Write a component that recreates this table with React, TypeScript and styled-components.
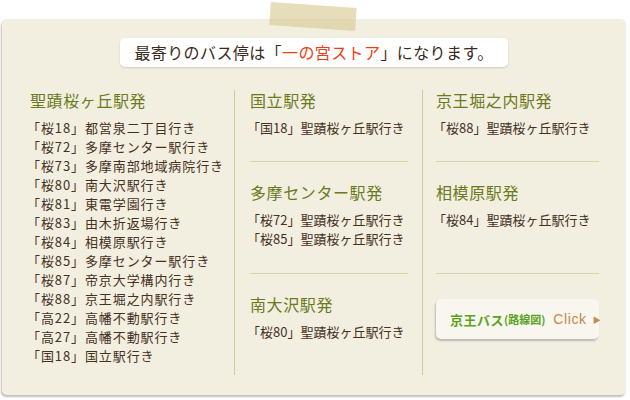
import React from 'react';
import styled, { createGlobalStyle } from 'styled-components';

const Global = createGlobalStyle`
  html, body { margin: 0; padding: 0; background: #ffffff; }
  body { font-family: "Noto Sans CJK JP", "Noto Sans", sans-serif; }
`;

const Page = styled.div`
  position: relative;
  width: 630px;
  height: 400px;
  padding: 19px 4px 0 2px;
  box-sizing: border-box;
`;

const Tape = styled.div`
  position: absolute;
  left: 270px;
  top: 5px;
  width: 86px;
  height: 23px;
  background: rgba(214, 200, 146, 0.62);
  transform: rotate(4deg);
  z-index: 2;
`;

const Panel = styled.div`
  height: 376px;
  background: #f2efe1;
  border-radius: 5px;
  box-shadow: -1px 2px 2px rgba(0, 0, 0, 0.25);
  padding-top: 19px;
  box-sizing: border-box;
  display: flex;
  flex-direction: column;
  align-items: center;
`;

const Banner = styled.div`
  width: 388px;
  height: 29px;
  background: #ffffff;
  border-radius: 5px;
  box-shadow: 0 1px 2px rgba(0, 0, 0, 0.15);
  font-size: 16px;
  line-height: 29px;
  letter-spacing: 0.4px;
  color: #3a2a1c;
  text-align: center;
`;

const Red = styled.span`
  color: #ee3d16;
`;

const Columns = styled.div`
  margin-top: 23px;
  width: 100%;
  display: grid;
  grid-template-columns: 232px 188px 1fr;
  min-height: 285px;
`;

const Column = styled.div<{ $divided?: boolean; $pl: number; $pr: number }>`
  padding-left: ${p => p.$pl}px;
  padding-right: ${p => p.$pr}px;
  border-left: ${p => (p.$divided ? '1px solid #cdcd98' : 'none')};
  display: flex;
  flex-direction: column;
`;

const SectionWrap = styled.div<{ $minH?: number }>`
  min-height: ${p => p.$minH ?? 0}px;
`;

const Heading = styled.h3`
  margin: 0 0 8px;
  font-size: 16px;
  line-height: 20px;
  font-weight: normal;
  letter-spacing: 0.6px;
  color: #6b7a20;
`;

const List = styled.ul<{ $spacing?: number }>`
  margin: 0 0 0 -3px;
  padding: 0;
  list-style: none;
  letter-spacing: ${p => p.$spacing ?? 0}px;
`;

const Item = styled.li`
  font-size: 13px;
  line-height: 19px;
  color: #47311d;
  white-space: nowrap;
`;

const Rule = styled.hr`
  margin: 24px 0 20px;
  border: none;
  border-top: 1px solid #d6d2ad;
  height: 0;
`;

const Button = styled.a`
  margin-top: 5px;
  width: 163px;
  height: 40px;
  flex: none;
  box-sizing: border-box;
  padding-left: 14px;
  background: #f8f6ee;
  border-radius: 5px;
  box-shadow: -1px 2px 2px rgba(0, 0, 0, 0.22);
  display: flex;
  align-items: center;
  text-decoration: none;
  white-space: nowrap;
`;

const BtnName = styled.span`
  font-size: 13px;
  font-weight: bold;
  color: #5aa31d;
  letter-spacing: 0.5px;
`;

const BtnSub = styled.span`
  font-size: 11px;
  font-weight: bold;
  color: #5aa31d;
  margin-right: 8px;
`;

const Click = styled.span`
  font-family: "Liberation Sans", Arial, sans-serif;
  font-size: 14px;
  color: #c6894a;
  letter-spacing: 0.6px;
`;

const Arrow = styled.span`
  font-size: 8px;
  color: #c6894a;
  margin-left: 6px;
`;

type Section = { title: string; items: string[] };

const col1: Section = {
  title: '聖蹟桜ヶ丘駅発',
  items: [
    '「桜18」都営泉二丁目行き',
    '「桜72」多摩センター駅行き',
    '「桜73」多摩南部地域病院行き',
    '「桜80」南大沢駅行き',
    '「桜81」東電学園行き',
    '「桜83」由木折返場行き',
    '「桜84」相模原駅行き',
    '「桜85」多摩センター駅行き',
    '「桜87」帝京大学構内行き',
    '「桜88」京王堀之内駅行き',
    '「高22」高幡不動駅行き',
    '「高27」高幡不動駅行き',
    '「国18」国立駅行き',
  ],
};

const col2: Section[] = [
  { title: '国立駅発', items: ['「国18」聖蹟桜ヶ丘駅行き'] },
  { title: '多摩センター駅発', items: ['「桜72」聖蹟桜ヶ丘駅行き', '「桜85」聖蹟桜ヶ丘駅行き'] },
  { title: '南大沢駅発', items: ['「桜80」聖蹟桜ヶ丘駅行き'] },
];

const col3: Section[] = [
  { title: '京王堀之内駅発', items: ['「桜88」聖蹟桜ヶ丘駅行き'] },
  { title: '相模原駅発', items: ['「桜84」聖蹟桜ヶ丘駅行き'] },
];

// row heights shared by the stacked sections of the two right columns
const rowHeights = [47, 67, 47];

const SectionBlock = ({ s, minH, spacing }: { s: Section; minH?: number; spacing?: number }) => (
  <SectionWrap $minH={minH}>
    <Heading>{s.title}</Heading>
    <List $spacing={spacing}>
      {s.items.map(i => (
        <Item key={i}>{i}</Item>
      ))}
    </List>
  </SectionWrap>
);

export default function App() {
  return (
    <Page>
      <Global />
      <Tape />
      <Panel>
        <Banner>
          最寄りのバス停は「<Red>一の宮ストア</Red>」になります。
        </Banner>
        <Columns>
          <Column $pl={28} $pr={0}>
            <SectionBlock s={col1} spacing={0.9} />
          </Column>
          <Column $divided $pl={15} $pr={14}>
            {col2.map((s, idx) => (
              <React.Fragment key={s.title}>
                {idx > 0 && <Rule />}
                <SectionBlock s={s} minH={rowHeights[idx]} />
              </React.Fragment>
            ))}
          </Column>
          <Column $divided $pl={13} $pr={30}>
            {col3.map((s, idx) => (
              <React.Fragment key={s.title}>
                {idx > 0 && <Rule />}
                <SectionBlock s={s} minH={rowHeights[idx]} />
              </React.Fragment>
            ))}
            <Rule />
            <Button href="#">
              <BtnName>京王バス</BtnName>
              <BtnSub>(路線図)</BtnSub>
              <Click>Click</Click>
              <Arrow>▶</Arrow>
            </Button>
          </Column>
        </Columns>
      </Panel>
    </Page>
  );
}
